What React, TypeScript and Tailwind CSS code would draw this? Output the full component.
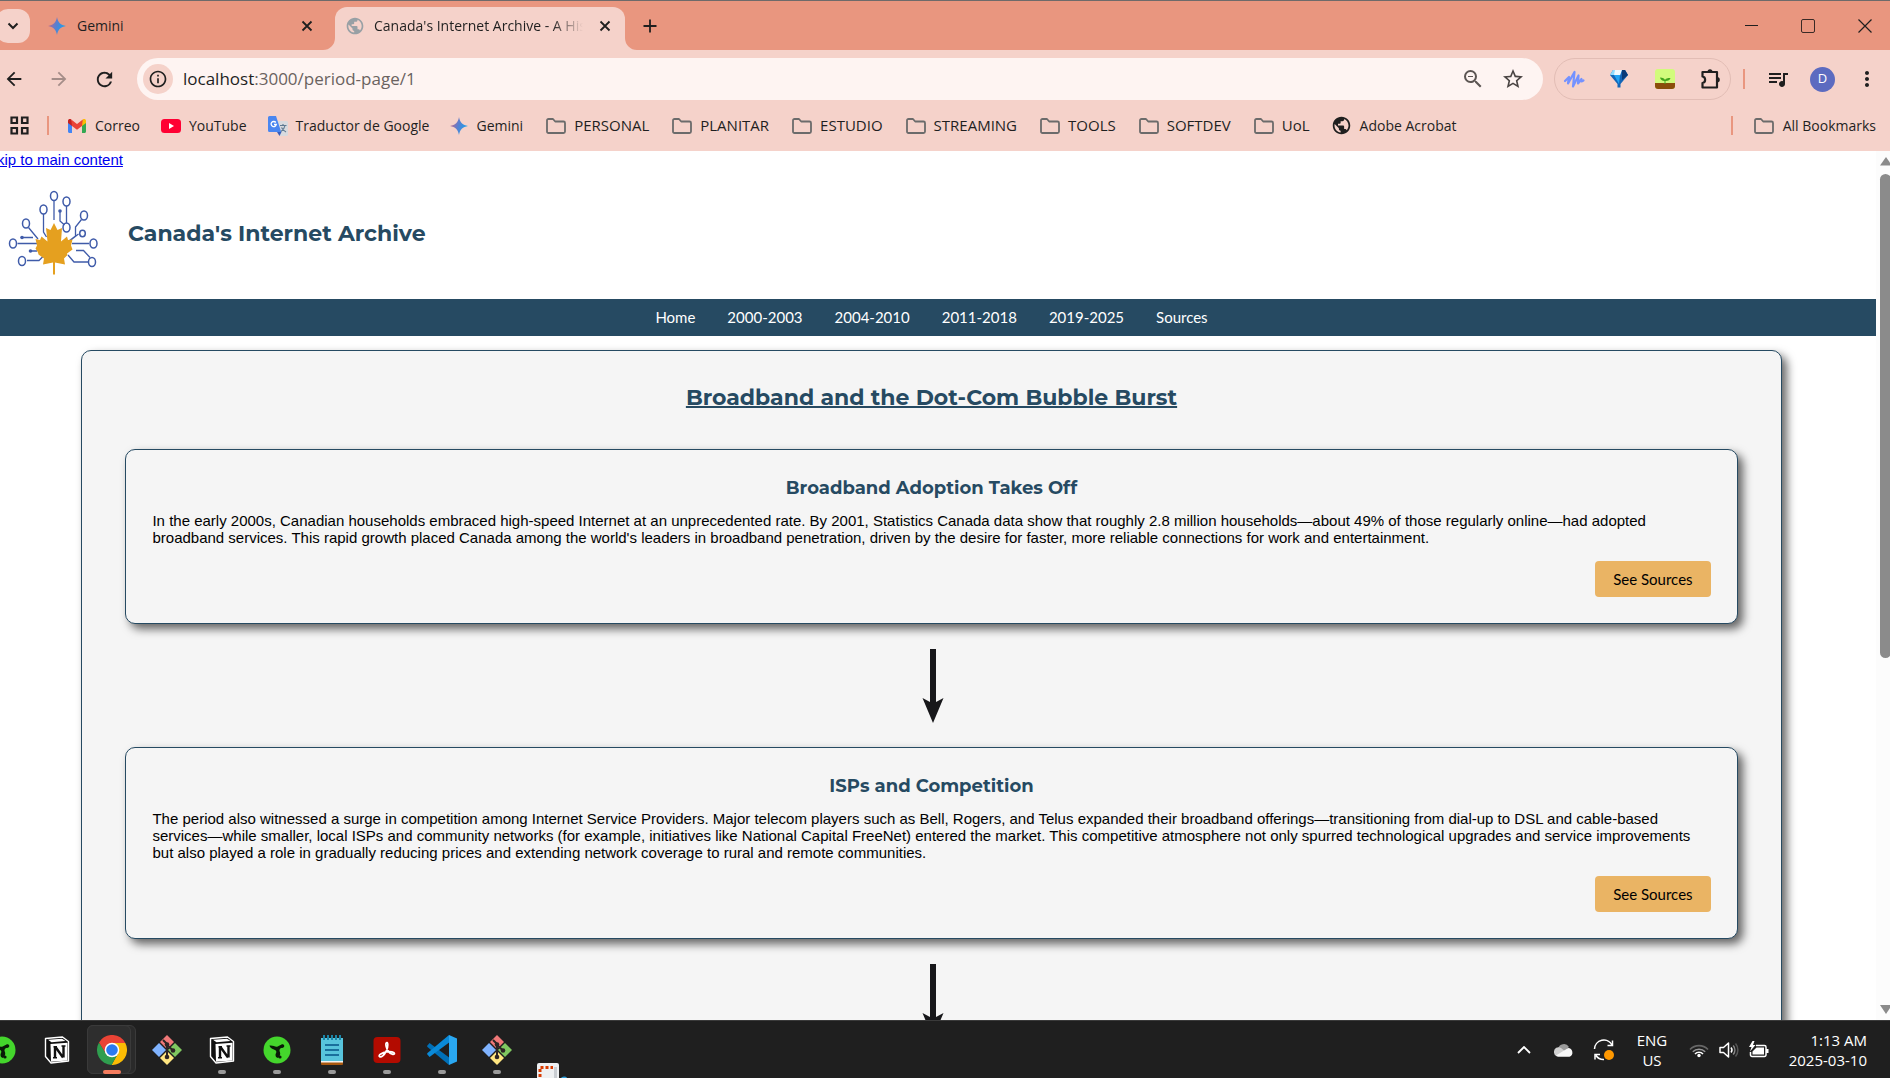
import React from "react";
import { MdPublic, MdQueueMusic, MdStarOutline, MdZoomOut, MdRefresh, MdArrowBack, MdArrowForward, MdInfoOutline, MdMoreVert } from "react-icons/md";

const UI = "font-['Segoe_UI','Open_Sans',sans-serif]";

function GeminiStar({ id }: { id: string }) {
  return (
    <svg viewBox="0 0 18 18" className="h-[18px] w-[18px]" aria-hidden="true">
      <defs>
        <linearGradient id={id} x1="0" y1="0.3" x2="1" y2="0.6">
          <stop offset="0.1" stopColor="#b06a94" />
          <stop offset="0.45" stopColor="#5a7fd0" />
          <stop offset="1" stopColor="#12a5f0" />
        </linearGradient>
      </defs>
      <path fill={`url(#${id})`} d="M9 0C9.800 5.200 12.800 8.200 18 9C12.800 9.800 9.800 12.800 9 18C8.200 12.800 5.200 9.800 0 9C5.200 8.200 8.200 5.200 9 0Z" />
    </svg>
  );
}

function Gmail() {
  return (
    <svg viewBox="0 0 20 16" className="h-4 w-5" aria-hidden="true">
      <path fill="#4285f4" d="M1 4v9.500C1 14.300 1.700 15 2.500 15H5V7z" />
      <path fill="#34a853" d="M19 4v9.500c0 .8-.7 1.500-1.500 1.500H15V7z" />
      <path fill="#fbbc04" d="M15 3v5l4-3V3c0-2-2-2.500-3.200-1.500z" />
      <path fill="#c5221f" d="M1 3v2l4 3V3l-.8-1.500C3 .5 1 1 1 3z" />
      <path fill="#ea4335" d="M4.200 1.500L10 6l5.800-4.500L15 8l-5 3.800L5 8z" />
    </svg>
  );
}

function YouTube() {
  return (
    <svg viewBox="0 0 20 16" className="h-4 w-5" aria-hidden="true">
      <rect y="1" width="20" height="14" rx="3.500" fill="#ff0033" />
      <path fill="#fff" d="M8 5l5 3-5 3z" />
    </svg>
  );
}

function Translate() {
  return (
    <svg viewBox="0 0 20 20" className="h-5 w-5" aria-hidden="true">
      <path fill="#d8dade" d="M8 5h10.500a1.500 1.500 0 0 1 1.500 1.500V18.500a1.500 1.500 0 0 1-1.500 1.500H12z" />
      <path fill="#3a5cb8" d="M9 16h4.500L11.500 20z" />
      <path fill="#4a86f0" d="M1.500 0H8l5.200 16H1.500A1.500 1.500 0 0 1 0 14.500v-13A1.500 1.500 0 0 1 1.500 0z" />
      <path fill="none" stroke="#fff" strokeWidth="1.300" d="M7.800 6.500A2.600 2.600 0 1 0 8.300 8.500H6" />
      <path fill="none" stroke="#5f7a92" strokeWidth="1.200" d="M12 9.500h6.500M15 8v1.500M17 9.500c-.5 3-2 4.500-4 6M13.500 11.500c1 2 2.500 3.300 4.500 4.500" />
    </svg>
  );
}

function Folder() {
  return (
    <svg viewBox="0 0 20 16" className="h-4 w-5" fill="none" stroke="#6b6b6b" strokeWidth="1.800" strokeLinejoin="round" aria-hidden="true">
      <path d="M1 2.500C1 1.700 1.600 1 2.500 1H7l2.200 2.500H17.500c.9 0 1.500.7 1.500 1.500v8.500c0 .8-.6 1.500-1.500 1.500H2.500c-.9 0-1.500-.7-1.500-1.500z" />
    </svg>
  );
}

function Cross({ className }: { className: string }) {
  return (
    <svg viewBox="0 0 12 12" className={className} fill="none" stroke="#1f1f1f" strokeWidth="1.800" aria-hidden="true">
      <path d="M1.500 1.500l9 9M10.500 1.500l-9 9" />
    </svg>
  );
}

function TabStrip() {
  return (
    <header className="flex h-[50px] shrink-0 items-center border-t border-[#6e6a6a] bg-[#e9967f]">
      <button aria-label="Search tabs" className="-ml-1 flex h-[34px] w-[34px] items-center justify-center rounded-xl bg-[#f5d2ca]">
        <svg viewBox="0 0 12 8" className="h-2 w-3" fill="none" stroke="#1f1f1f" strokeWidth="2"><path d="M1.500 1.500L6 6l4.500-4.500" /></svg>
      </button>
      <div className="flex w-[305px] items-center pl-[18px] pr-[22px]">
        <GeminiStar id="star-tab" />
        <span className="ml-[11px] flex-1">Gemini</span>
        <button aria-label="Close Gemini tab"><Cross className="h-3 w-3" /></button>
      </div>
      <div className="relative mt-auto flex h-[43px] w-[290px] items-center rounded-t-xl bg-[#f5d2ca] pb-1.5 pl-[10px] pr-[14px]">
        <svg viewBox="0 0 12 12" className="absolute -left-3 bottom-0 h-3 w-3" fill="#f5d2ca"><path d="M12 0v12H0A12 12 0 0 0 12 0z" /></svg>
        <svg viewBox="0 0 12 12" className="absolute -right-3 bottom-0 h-3 w-3" fill="#f5d2ca"><path d="M0 0v12h12A12 12 0 0 1 0 0z" /></svg>
        <MdPublic className="h-5 w-5 text-[#98a0a5]" />
        <span className="ml-[9px] mr-4 flex-1 overflow-hidden whitespace-nowrap bg-linear-to-r from-[#1f1f1f] from-85% to-transparent bg-clip-text text-transparent">Canada's Internet Archive - A History</span>
        <button aria-label="Close Canada's Internet Archive tab"><Cross className="h-3 w-3" /></button>
      </div>
      <button aria-label="New tab" className="ml-[18px]">
        <svg viewBox="0 0 14 14" className="h-3.5 w-3.5" stroke="#1f1f1f" strokeWidth="1.800"><path d="M7 .5v13M.5 7h13" /></svg>
      </button>
      <div className="ml-auto flex items-center gap-[43px] pr-[18px]">
        <button aria-label="Minimize" className="h-px w-[13px] bg-[#1f1f1f]" />
        <button aria-label="Maximize" className="h-3.5 w-3.5 rounded-xs border border-[#3a2a26]" />
        <button aria-label="Close window"><svg viewBox="0 0 14 14" className="h-3.5 w-3.5" stroke="#1f1f1f" strokeWidth="1.200"><path d="M.5 .5l13 13M13.500 .5l-13 13" /></svg></button>
      </div>
    </header>
  );
}

function Toolbar() {
  return (
    <div className="flex h-[58px] shrink-0 items-center bg-[#f5d2ca] text-[#1f1f1f]">
      <div className="flex items-center gap-[23px] pl-[3px]">
        <button aria-label="Back"><MdArrowBack className="h-[22px] w-[22px]" /></button>
        <button aria-label="Forward" className="text-[#a48d88]"><MdArrowForward className="h-[22px] w-[22px]" /></button>
        <button aria-label="Reload"><MdRefresh className="h-[23px] w-[23px]" /></button>
      </div>
      <div className="ml-[21px] flex h-[42px] flex-1 items-center rounded-full bg-[#fef4f2] pl-1.5 pr-[18px] text-[17px]">
        <button aria-label="Site information" className="flex h-[30px] w-[30px] items-center justify-center rounded-full bg-[#f5d2ca]"><MdInfoOutline className="h-5 w-5" /></button>
        <label htmlFor="address" className="ml-2.5">localhost</label>
        <input id="address" defaultValue=":3000/period-page/1" className="min-w-0 flex-1 bg-transparent text-[#6a6260] outline-none" />
        <button aria-label="Zoom"><MdZoomOut className="h-6 w-6 text-[#5c5553]" /></button>
        <button aria-label="Bookmark this page" className="ml-4"><MdStarOutline className="h-6 w-6 text-[#4a4443]" /></button>
      </div>
      <div className="ml-[11px] flex h-[42px] w-[177px] items-center justify-between rounded-full border border-[#e2bdb5] pl-2 pr-2">
        <button aria-label="Voice extension">
          <svg viewBox="0 0 22 20" className="h-5 w-[22px]" fill="none" stroke="#7492ff" strokeWidth="2.200" strokeLinecap="round" strokeLinejoin="round"><path d="M2 12L6 8 5 14.500 11.500 3 10 17.500 15.500 6.500 15 14.500 18.500 10V12.500L20.500 11.500" /></svg>
        </button>
        <button aria-label="Gem extension">
          <svg viewBox="0 0 20 20" className="h-5 w-5">
            <path fill="#1266b8" d="M4 1h12l3 5-7.500 9v3.500h-3V15L1 6z" />
            <path fill="#8fdcff" d="M4 1h6L5 6H1z" />
            <path fill="#f0faff" d="M6 1h7l-2 5.500L5 6z" />
            <path fill="#21a4f4" d="M5 6h6l-1 9z" />
            <path fill="#0a3a78" d="M13 1h3l3 5-6 5z" />
          </svg>
        </button>
        <button aria-label="Plant extension">
          <svg viewBox="0 0 22 22" className="h-[22px] w-[22px]">
            <rect x="1" y="1" width="20" height="20" rx="3" fill="#d2fb7c" />
            <path fill="#8a4d0a" d="M1 15h20v3a3 3 0 0 1-3 3H4a3 3 0 0 1-3-3z" />
            <path fill="#43a51c" d="M10.500 16v-3C8 13 6.500 11.500 6 9.500c3 0 4.500 1 5 2.500 .5-1.500 2.500-2 5.500-2-.5 2-2 3-5 3v3z" />
          </svg>
        </button>
        <button aria-label="Extensions">
          <svg viewBox="0 0 22 22" className="h-[22px] w-[22px]" fill="none" stroke="#1f1f1f" strokeWidth="2.200" strokeLinejoin="round">
            <path d="M2.500 4h14.500v6.500h0V19.500H2.500V15c3.500-.5 3.500-6 0-6.500z" />
            <path fill="#1f1f1f" stroke="none" d="M7.500 4a2.500 2.800 0 0 1 5 0zM17 9a2.800 2.700 0 0 1 0 5.400z" />
          </svg>
        </button>
      </div>
      <span className="ml-3 h-5 w-0.5 bg-[#e9967f]" />
      <button aria-label="Media controls" className="ml-[21px]"><MdQueueMusic className="h-6 w-6" /></button>
      <button aria-label="Profile" className="ml-5 flex h-[25px] w-[25px] items-center justify-center rounded-full bg-[#5c6bc0] text-[13px] text-white">D</button>
      <button aria-label="Browser menu" className="ml-5 mr-[11px]"><MdMoreVert className="h-6 w-6" /></button>
    </div>
  );
}

const shortcuts: { label: string; icon: React.ReactNode }[] = [
  { label: "Correo", icon: <Gmail /> },
  { label: "YouTube", icon: <YouTube /> },
  { label: "Traductor de Google", icon: <Translate /> },
  { label: "Gemini", icon: <GeminiStar id="star-bookmark" /> },
];

const folders = ["PERSONAL", "PLANITAR", "ESTUDIO", "STREAMING", "TOOLS", "SOFTDEV", "UoL"];

function BookmarkBar() {
  return (
    <nav aria-label="Bookmarks" className="flex h-[43px] shrink-0 items-center whitespace-nowrap bg-[#f5d2ca] pb-2 pl-2.5 pr-3.5">
      <button aria-label="Apps">
        <svg viewBox="0 0 19 19" className="h-[19px] w-[19px]" fill="none" stroke="#1f1f1f" strokeWidth="2.200"><path d="M1.500 1.500h5.500v5.500H1.500zM12 1.500h5.500v5.500H12zM1.500 12h5.500v5.500H1.500zM12 12h5.500v5.500H12z" /></svg>
      </button>
      <span className="mx-[18px] h-[19px] w-0.5 bg-[#e9967f]" />
      <div className="flex gap-[21px]">
        {shortcuts.map((b) => (
          <a key={b.label} href="#" className="flex items-center gap-2">{b.icon}{b.label}</a>
        ))}
      </div>
      <div className="ml-[23px] flex gap-[23px] text-[15px]">
        {folders.map((f) => (
          <a key={f} href="#" className="flex items-center gap-2"><Folder />{f}</a>
        ))}
      </div>
      <a href="#" className="ml-[21px] flex items-center gap-2"><MdPublic className="h-[21px] w-[21px]" />Adobe Acrobat</a>
      <span className="ml-auto mr-[21px] h-[19px] w-0.5 bg-[#e9967f]" />
      <a href="#" className="flex items-center gap-[9px]"><Folder />All Bookmarks</a>
    </nav>
  );
}

function Logo() {
  const rings: [number, number][] = [[54, 15], [66.5, 20.5], [43.5, 28.5], [84, 34.5], [26, 42.5], [66.5, 46.5], [82.5, 52.5], [13, 62.5], [93.5, 62.5], [22, 80], [92, 81]];
  return (
    <svg viewBox="0 3 108 100" className="h-[100px] w-[108px]" role="img" aria-label="Maple leaf with circuit lines">
      <g fill="none" stroke="#3f5ba9" strokeWidth="1.300">
        <path d="M54 20v19M66.500 25v17M43.500 33v18l3 5M60 31v9l4.500 4M81.500 38.500L75.500 46v9L69 60M78.500 53l-9 7M28.500 46.500L38 58M22 56.500h11M17.500 62.500H37M72 62.500h17M30 70h7M27 79.500h12l4-4M76 69.500h7.500l6.500 7M68 74l6 7h14" />
        {rings.map(([x, y]) => <ellipse key={`${x}-${y}`} cx={x} cy={y} rx={x === 82.5 ? 2.8 : 3.5} ry={x === 82.5 ? 3.2 : 4.5} strokeWidth="1.500" />)}
      </g>
      <g fill="#3f5ba9"><circle cx="60" cy="30" r="1.800" /><circle cx="22" cy="56.500" r="1.800" /><circle cx="30.500" cy="70" r="1.800" /></g>
      <path fill="#e5a01f" d="M54 42l3.500 7 4.500-2-1 13.500 6-5 1 3.500 4.500-.5-1.500 6 1.500 4-5.500 4 .5 1.500-3.500 3.500 1 6-10-2v12h-2v-12l-10 2 1-6-5.500-4-.5-2-2.500-4 1.500-3-1.500-6.500 4.500 1 1.500-3.500 6 5L46 47l4.500 2z" />
    </svg>
  );
}

const periods = ["Home", "2000-2003", "2004-2010", "2011-2018", "2019-2025", "Sources"];

const sections = [
  {
    title: "Broadband Adoption Takes Off",
    body: "In the early 2000s, Canadian households embraced high-speed Internet at an unprecedented rate. By 2001, Statistics Canada data show that roughly 2.8 million households—about 49% of those regularly online—had adopted broadband services. This rapid growth placed Canada among the world's leaders in broadband penetration, driven by the desire for faster, more reliable connections for work and entertainment.",
  },
  {
    title: "ISPs and Competition",
    body: "The period also witnessed a surge in competition among Internet Service Providers. Major telecom players such as Bell, Rogers, and Telus expanded their broadband offerings—transitioning from dial-up to DSL and cable-based services—while smaller, local ISPs and community networks (for example, initiatives like National Capital FreeNet) entered the market. This competitive atmosphere not only spurred technological upgrades and service improvements but also played a role in gradually reducing prices and extending network coverage to rural and remote communities.",
  },
];

function ArchivePage() {
  return (
    <div className="-ml-[13px] min-w-0 flex-1 overflow-hidden bg-white font-['Liberation_Sans',Arial,sans-serif] text-[15px] leading-[17px] text-black">
      <a href="#main" className="block w-fit text-[#0000ee] underline">Skip to main content</a>
      <div className="flex h-[131px] items-center pl-[13px]">
        <Logo />
        <h1 className="ml-5 font-['Montserrat','Inter',sans-serif] text-[22px] font-bold text-[#264a62]">Canada's Internet Archive</h1>
      </div>
      <nav aria-label="Periods" className="flex h-[37px] items-center justify-center gap-8 bg-[#264a62] font-['Lato',sans-serif] text-white">
        {periods.map((p) => <a key={p} href="#">{p}</a>)}
      </nav>
      <main id="main" className="mx-auto mt-3.5 w-[90%] rounded-[10px] border border-[#264a62] bg-[#f5f5f5] px-[43px] pb-10 shadow-[5px_5px_10px_rgba(0,0,0,0.6)]">
        <h2 className="pb-9 pt-8 text-center font-['Montserrat','Inter',sans-serif] text-[22px] leading-[30px] font-bold text-[#264a62] underline decoration-2">Broadband and the Dot-Com Bubble Burst</h2>
        {sections.map((s) => (
          <React.Fragment key={s.title}>
            <section className="rounded-[10px] border border-[#264a62] bg-[#f5f5f5] p-[26px] shadow-[5px_5px_10px_rgba(0,0,0,0.6)]">
              <h3 className="text-center font-['Montserrat','Inter',sans-serif] text-lg leading-6 font-bold text-[#264a62]">{s.title}</h3>
              <p className="mt-3">{s.body}</p>
              <div className="mt-[15px] flex justify-end">
                <button className="h-9 rounded bg-[#eab464] px-[18px] font-['Lato',sans-serif]">See Sources</button>
              </div>
            </section>
            <div className="flex h-[123px] items-center justify-center pl-[3px]">
              <svg viewBox="0 0 22 74" className="h-[74px] w-[22px]" fill="#17171a" aria-hidden="true"><path d="M8 0h6v53l7.500-4L11 74 .5 49l7.500 4z" /></svg>
            </div>
          </React.Fragment>
        ))}
      </main>
    </div>
  );
}

function Scrollbar() {
  return (
    <div className="flex w-3.5 shrink-0 flex-col overflow-hidden bg-[#fcfcfc] py-1.5 pl-1" aria-hidden="true">
      <svg viewBox="0 0 12 9" className="h-[9px] w-3 shrink-0" fill="#8b8b8b"><path d="M6 0l6 8.500H0z" /></svg>
      <div className="mt-2 h-[56.5%] w-[11px] rounded-full bg-[#8b8b8b]" />
      <svg viewBox="0 0 12 9" className="mt-auto h-[9px] w-3 shrink-0" fill="#8b8b8b"><path d="M0 0h12L6 9z" /></svg>
    </div>
  );
}

function Razer() {
  return (
    <svg viewBox="0 0 30 30" className="h-[30px] w-[30px]">
      <circle cx="15" cy="15" r="13.500" fill="#44d62c" />
      <path fill="#0a1a08" d="M7.500 10.500c3-.5 5 1 7 1.300 1.500.2 3-2 6-2.300.8 1 .8 2.200.2 3.200-1.800-.2-3 .8-3.200 2.300-.2 1.300.8 2.200.7 3.700-.1 2-1.200 3.300-2.200 4.300-1.700-.3-2.500-1.500-2.500-3 0-1.300 1-2.200.8-3.500-.3-2-2-1.500-3.600-2.500C8.800 13 7.800 12 7.500 10.500z" />
      <circle cx="20.500" cy="11" r="1.800" fill="#0a1a08" /><circle cx="18" cy="22" r="1.600" fill="#0a1a08" />
    </svg>
  );
}

function Notion() {
  return (
    <svg viewBox="0 0 30 30" className="h-[30px] w-[30px]">
      <path fill="#111" stroke="#fff" strokeWidth="1.400" strokeLinejoin="round" d="M3.500 3.500L20.500 2 26.500 6.500V26L9 28 3.500 21.500z" />
      <path fill="#fff" d="M6 4.800L20 3.700 23.500 6 9.500 7.200zM8.500 9L25.500 7.800V25.500L9 26.800z" />
      <path fill="none" stroke="#111" strokeWidth="1.500" d="M11.500 11.700h3.500M19.500 11h4M11 22.700h4" />
      <path fill="none" stroke="#111" strokeWidth="2.400" d="M13 12v10.500M13.500 12l7.500 10.500M21.500 11v11.500" />
    </svg>
  );
}

function Chrome() {
  return (
    <svg viewBox="0 0 30 30" className="h-[30px] w-[30px]">
      <path fill="#fbbc04" d="M15 8h13.300A15 15 0 0 1 14.500 30L21 18.500z" />
      <path fill="#2f9e4f" d="M2 7.500A15 15 0 0 0 14.500 30l6.500-11.500-12 0z" />
      <path fill="#ea4335" d="M15 8h13.300A15 15 0 0 0 2 7.500l6.900 11z" />
      <circle cx="15" cy="15" r="7.300" fill="#fff" />
      <circle cx="15" cy="15" r="5.800" fill="#2b7af0" />
    </svg>
  );
}

function Git() {
  return (
    <svg viewBox="0 0 30 30" className="h-[30px] w-[30px]">
      <path fill="#f07878" d="M15 0l7 7-7 7-7-7z" />
      <path fill="#80b3ff" d="M7 8l7 7-7 7-7-7z" />
      <path fill="#80c860" d="M23 8l7 7-7 7-7-7z" />
      <path fill="#ffe680" d="M15 16l7 7-7 7-7-7z" />
      <g stroke="#2d2524" strokeWidth="2" fill="none"><path d="M11 5l4 4v13M15 10l6 5.500" /></g>
      <g fill="#2d2524"><circle cx="15" cy="9.500" r="2.300" /><circle cx="21" cy="15.500" r="2.300" /><circle cx="15" cy="22" r="2.300" /></g>
    </svg>
  );
}

function Notepad() {
  return (
    <svg viewBox="0 0 30 30" className="h-[30px] w-[30px]">
      <rect x="4" y="25" width="22" height="5" rx="1" fill="#a8580f" />
      <rect x="4" y="24" width="22" height="3.500" fill="#f3f3f3" />
      <path fill="#58c4dc" d="M4 3h22v23H4z" />
      <path stroke="#1a6f9c" strokeWidth="1.800" d="M8 10h14M8 15h14M8 20h14" />
      <path stroke="#1b86a8" strokeWidth="2" d="M7 0v5M11 0v5M15 0v5M19 0v5M23 0v5" />
    </svg>
  );
}

function Acrobat() {
  return (
    <svg viewBox="0 0 30 30" className="h-[30px] w-[30px]">
      <rect x="1.500" y="2" width="27" height="26" rx="4" fill="#b30b00" />
      <path fill="none" stroke="#fff" strokeWidth="1.700" d="M7.500 21.500c-1.800-1.200 3-4 7-4.700s8 .2 8 1.700-4 .8-6-1.800-3.500-8-2-9 2 4-.2 8.300-5 6.800-6.800 5.500z" />
    </svg>
  );
}

function VSCode() {
  return (
    <svg viewBox="0 0 30 30" className="h-[30px] w-[30px]">
      <path fill="#0070b8" d="M0 11l2.500-3 21 15.500L22 30 .5 12z" />
      <path fill="#0a8ad8" d="M0 19l2.500 3 21-15.500L22 0 .5 18z" />
      <path fill="#2aa8f2" d="M22 0l8 3.500v23L22 30z" />
    </svg>
  );
}

const apps: { name: string; icon: React.ReactNode; open?: boolean; active?: boolean }[] = [
  { name: "Razer Synapse", icon: <Razer /> },
  { name: "Notion", icon: <Notion /> },
  { name: "Chrome", icon: <Chrome />, active: true },
  { name: "Git Bash", icon: <Git /> },
  { name: "Notion window", icon: <Notion />, open: true },
  { name: "Razer window", icon: <Razer />, open: true },
  { name: "Notepad", icon: <Notepad />, open: true },
  { name: "Acrobat", icon: <Acrobat />, open: true },
  { name: "Visual Studio Code", icon: <VSCode />, open: true },
  { name: "Git Bash window", icon: <Git />, open: true },
];

function Taskbar() {
  return (
    <footer className="flex h-[58px] shrink-0 items-stretch overflow-hidden border-t border-[#3a3a3a] bg-[#1f1f1f] text-[15px] leading-5 text-white">
      <div className="-ml-[26px] flex">
        {apps.map((a) => (
          <button key={a.name} aria-label={a.name} className="relative flex w-[55px] items-center justify-center">
            {a.active && <span className="absolute inset-x-[3px] inset-y-1 rounded-md border border-[#3a3a3a] bg-[#2a2a2a]" />}
            {a.active && <span className="absolute inset-y-1 left-[3px] w-11 rounded-md border border-[#3a3a3a] bg-[#2e2e2e]" />}
            <span className="relative">{a.icon}</span>
            {a.active && <span className="absolute bottom-1 h-1 w-[18px] rounded-full bg-[#f47c5e]" />}
            {a.open && <span className="absolute bottom-1 h-1 w-2 rounded-full bg-[#9a9a9a]" />}
          </button>
        ))}
        <button aria-label="Snipping Tool" className="ml-[13px] flex items-start pt-[42px]">
          <svg viewBox="0 0 30 24" className="h-6 w-[30px]">
            <rect width="22" height="24" rx="2" fill="#eef0f2" />
            <path fill="#c9cdd2" d="M17 4h3v20h-3z" />
            <path fill="none" stroke="#d83b01" strokeWidth="3" strokeDasharray="3 2" d="M3 24V4.500h13" />
            <circle cx="27" cy="17" r="2.500" fill="none" stroke="#2a9bd8" strokeWidth="2" />
          </svg>
        </button>
      </div>
      <div className="ml-auto flex items-center pr-[23px]">
        <button aria-label="Show hidden icons"><svg viewBox="0 0 14 8" className="h-2 w-3.5" fill="none" stroke="#fff" strokeWidth="1.800"><path d="M1 7l6-6 6 6" /></svg></button>
        <button aria-label="OneDrive" className="ml-[23px]">
          <svg viewBox="0 0 20 14" className="h-3.5 w-5">
            <path fill="#9b9b9b" d="M4 6a6 6 0 0 1 11-2l-6 5z" />
            <path fill="#d0d0d0" d="M0 9a4.500 4.500 0 0 1 7-4l5 4-9 4.500A4.500 4.500 0 0 1 0 9z" />
            <path fill="#f7f7f7" d="M2 12.500L14 5a4.500 4.500 0 0 1 1.500 8.700H4z" />
          </svg>
        </button>
        <button aria-label="Windows Update" className="ml-[19px]">
          <svg viewBox="0 0 22 22" className="h-[22px] w-[22px]" fill="none" stroke="#fff" strokeWidth="1.500">
            <path d="M1.500 10A9.300 9.300 0 0 1 19 6M19.500 1.500V6.500H14.500M2 20.500V15.500H7M3 16.500a9 9 0 0 0 8 4" />
            <circle cx="16" cy="16" r="5" fill="#ff9800" stroke="none" />
          </svg>
        </button>
        <button aria-label="Input language: English US" className="ml-[22px] w-[30px] whitespace-nowrap"><span className="flex flex-col items-center"><span>ENG</span><span>US</span></span></button>
        <button aria-label="Network, volume and battery" className="ml-[22px] flex items-center gap-2.5">
          <svg viewBox="0 0 20 16" className="h-4 w-5" fill="none" strokeWidth="1.600">
            <path stroke="#666" d="M1 7.500a12.500 12.500 0 0 1 18 0" /><path stroke="#999" d="M3.800 9.800a8.800 8.800 0 0 1 12.400 0" /><path stroke="#fff" d="M6 12a5.500 5.500 0 0 1 8 0" /><circle cx="10" cy="13.500" r="1.700" fill="#fff" />
          </svg>
          <svg viewBox="0 0 20 18" className="h-[18px] w-5" fill="none" strokeWidth="1.500" stroke="#fff">
            <path strokeLinejoin="round" d="M1 6.500h3.500L9.500 2v14l-5-4.500H1z" /><path d="M12 6.500a4 4 0 0 1 0 5" /><path stroke="#888" d="M14.200 4.500a7 7 0 0 1 0 9" /><path stroke="#555" d="M16.500 2.500a10 10 0 0 1 0 13" />
          </svg>
          <svg viewBox="0 0 20 18" className="h-[18px] w-5" fill="none" stroke="#fff" strokeWidth="1.500">
            <path d="M7 4.500h8.500a1.500 1.500 0 0 1 1.500 1.500v8a1.500 1.500 0 0 1-1.500 1.500H3A1.500 1.500 0 0 1 1.500 14v-3" /><path fill="#fff" stroke="none" d="M3.500 13.500v-3l4-4H15v7zM17 8h2.500v4H17zM3.500 0L0 6h2.500L1 10.500 6.500 4H4L5.500 0z" />
          </svg>
        </button>
        <button className="ml-5 w-[78px] whitespace-nowrap"><span className="flex flex-col items-end"><span>1:13 AM</span><span>2025-03-10</span></span></button>
      </div>
    </footer>
  );
}

export default function App() {
  return (
    <div className={`${UI} flex h-screen flex-col overflow-hidden text-[14px] text-[#1f1f1f]`}>
      <TabStrip />
      <Toolbar />
      <BookmarkBar />
      <div className="flex min-h-0 flex-1 overflow-hidden bg-white">
        <ArchivePage />
        <Scrollbar />
      </div>
      <Taskbar />
    </div>
  );
}
